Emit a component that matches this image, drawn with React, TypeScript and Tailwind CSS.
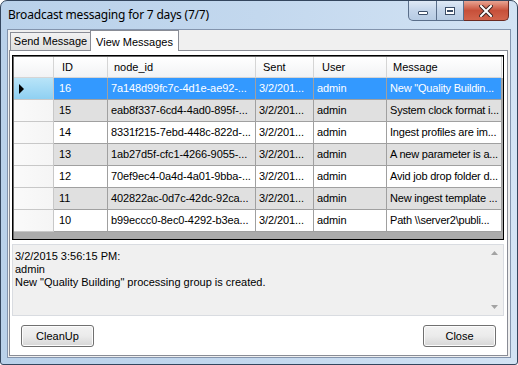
import React from 'react';

type Row = { id: number; node: string; sent: string; user: string; msg: string };

const rows: Row[] = [
  { id: 16, node: '7a148d99fc7c-4d1e-ae92-...', sent: '3/2/201...', user: 'admin', msg: 'New "Quality Buildin...' },
  { id: 15, node: 'eab8f337-6cd4-4ad0-895f-...', sent: '3/2/201...', user: 'admin', msg: 'System clock format i...' },
  { id: 14, node: '8331f215-7ebd-448c-822d-...', sent: '3/2/201...', user: 'admin', msg: 'Ingest profiles are im...' },
  { id: 13, node: '1ab27d5f-cfc1-4266-9055-...', sent: '3/2/201...', user: 'admin', msg: 'A new parameter is a...' },
  { id: 12, node: '70ef9ec4-0a4d-4a01-9bba-...', sent: '3/2/201...', user: 'admin', msg: 'Avid job drop folder d...' },
  { id: 11, node: '402822ac-0d7c-42dc-92ca...', sent: '3/2/201...', user: 'admin', msg: 'New ingest template ...' },
  { id: 10, node: 'b99eccc0-8ec0-4292-b3ea...', sent: '3/2/201...', user: 'admin', msg: 'Path \\\\server2\\publi...' },
];

const sans = "font-['Liberation_Sans',Arial,sans-serif]";

function CaptionButtons() {
  return (
    <div className="flex h-[20px] mr-[8px]">
      {/* minimize */}
      <div className="w-[29px] h-[20px] border border-t-0 border-[#5a6e8a] rounded-bl-[5px] bg-gradient-to-b from-[#dfe9f5] via-[#c4d5ea] to-[#b6cbe3] flex items-center justify-center">
        <div className="w-[10px] h-[4px] mt-[5px] bg-white border border-[#3c4e68] rounded-[1px]" />
      </div>
      {/* maximize */}
      <div className="w-[27px] h-[20px] border border-t-0 border-l-0 border-[#5a6e8a] bg-gradient-to-b from-[#dfe9f5] via-[#c4d5ea] to-[#b6cbe3] flex items-center justify-center">
        <div className="w-[10px] h-[8px] border border-[#3c4e68] bg-white flex items-center justify-center">
          <div className="w-[6px] h-[2px] border border-[#3c4e68] mt-[1px]" />
        </div>
      </div>
      {/* close */}
      <div className="w-[45px] h-[20px] border border-t-0 border-l-0 border-[#6b2a22] rounded-br-[5px] bg-gradient-to-b from-[#e8a493] via-[#c7503a] to-[#d2644c] flex items-center justify-center">
        <svg width="14" height="12" viewBox="0 0 14 12">
          <path d="M2 1 L12 11 M12 1 L2 11" stroke="#3c2320" strokeWidth="4" strokeLinecap="square" />
          <path d="M2 1 L12 11 M12 1 L2 11" stroke="#ffffff" strokeWidth="2" strokeLinecap="square" />
        </svg>
      </div>
    </div>
  );
}

function Grid() {
  const cols = ['w-[54px] pl-[5px]', 'w-[148px] pl-[3px]', 'w-[58px] pl-[3px]', 'w-[73px] pl-[3px]', 'w-[115px] pl-[3px] tracking-[-0.2px]'];
  const heads = [
    { label: 'ID', cls: 'w-[54px] pl-[8px]' },
    { label: 'node_id', cls: 'w-[148px] pl-[6px]' },
    { label: 'Sent', cls: 'w-[58px] pl-[7px]' },
    { label: 'User', cls: 'w-[73px] pl-[8px]' },
    { label: 'Message', cls: 'w-[115px] pl-[6px]' },
  ];
  return (
    <div className="h-[185px] border border-black bg-[#ababab] overflow-hidden">
      <div className="border-l border-t border-[#696969] h-full">
        {/* header */}
        <div className="flex h-[21px] bg-gradient-to-b from-white to-[#f1f2f4]">
          <div className="w-[40px] h-full border-r border-b border-[#d5d5d5]" />
          {heads.map((h) => (
            <div key={h.label} className={`${h.cls} h-full flex items-center border-r border-b border-[#d5d5d5] text-[11px] text-black whitespace-nowrap`}>
              {h.label}
            </div>
          ))}
        </div>
        {rows.map((r, i) => {
          const sel = i === 0;
          const bg = sel ? 'bg-[#3399ff] text-white' : i % 2 === 1 ? 'bg-[#e0e0e0] text-black' : 'bg-white text-black';
          const vals = [String(r.id), r.node, r.sent, r.user, r.msg];
          return (
            <div key={r.id} className="flex h-[22px]">
              <div
                className={`w-[40px] h-full border-r border-b border-[#c8c8c8] flex items-center pl-[5px] ${
                  sel ? 'bg-gradient-to-b from-[#b8e4f8] to-[#8fd0f2]' : 'bg-gradient-to-r from-[#fafafa] to-[#f5f5f5]'
                }`}
              >
                {sel && (
                  <svg width="6" height="10" viewBox="0 0 6 10">
                    <path d="M0 0 L5 5 L0 10 Z" fill="#000" />
                  </svg>
                )}
              </div>
              {vals.map((v, j) => (
                <div key={j} className={`${cols[j]} ${bg} h-full flex items-center border-r border-b border-[#a0a0a0] text-[11px] tracking-[-0.1px] whitespace-nowrap overflow-hidden`}>
                  {v}
                </div>
              ))}
            </div>
          );
        })}
      </div>
    </div>
  );
}

function MessageBox() {
  return (
    <div className="h-[72px] border border-[#d9dce1] bg-[#f0f0f0] flex">
      <div className="flex-1 pl-[2px] pt-[5px] text-[11px] leading-[13px] text-black">
        <div>3/2/2015 3:56:15 PM:</div>
        <div>admin</div>
        <div>New "Quality Building" processing group is created.</div>
      </div>
      <div className="w-[17px] h-full flex flex-col items-center justify-between py-[6px]">
        <svg width="7" height="4" viewBox="0 0 7 4">
          <path d="M0 4 L3.5 0 L7 4 Z" fill="#a3a3a3" />
        </svg>
        <svg width="7" height="4" viewBox="0 0 7 4">
          <path d="M0 0 L3.5 4 L7 0 Z" fill="#a3a3a3" />
        </svg>
      </div>
    </div>
  );
}

function Button({ label }: { label: string }) {
  return (
    <button className="w-[73px] h-[22px] rounded-[3px] border border-[#707070] bg-gradient-to-b from-[#f2f2f2] via-[#ebebeb] to-[#d6d6d6] text-[11px] text-black shadow-[inset_0_0_0_1px_#fcfcfc]">
      {label}
    </button>
  );
}

export default function App() {
  return (
    <div className={`w-[518px] h-[365px] bg-white ${sans}`}>
      <div className="w-full h-full rounded-t-[7px] rounded-b-[3px] border border-[#34465e] bg-gradient-to-r from-[#b9d1ea] via-[#c3d8ee] to-[#d3e3f4] flex flex-col">
        {/* title bar */}
        <div className="h-[28px] flex items-start justify-between">
          <div className="pl-[7px] pt-[6px] text-[12px] leading-[16px] text-black font-['Noto_Sans',sans-serif] tracking-[-0.2px]">
            Broadcast messaging for 7 days (7/7)
          </div>
          <CaptionButtons />
        </div>
        {/* client area */}
        <div className="mx-[6px] mb-[6px] flex-1 border border-[#8394ad] bg-[#f0f0f0] flex flex-col pl-[1px] pr-[2px] pb-[1px]">
          {/* tabs */}
          <div className="flex h-[20px] items-end pl-[1px]">
            <div className="w-[81px] h-[18px] border border-b-0 border-[#898c95] bg-gradient-to-b from-[#f2f2f2] to-[#e0e0e0] text-[11px] flex items-center justify-center">
              Send Message
            </div>
            <div className="w-[89px] h-[21px] border border-b-0 border-[#898c95] bg-white text-[11px] flex items-start justify-center pt-[3px] relative z-10 -mb-[1px] -ml-[1px]">
              View Messages
            </div>
          </div>
          {/* tab page */}
          <div className="flex-1 border border-[#898c95] bg-white flex flex-col pl-[2px] pr-[3px] pt-[4px]">
            <Grid />
            <div className="h-[4px]" />
            <MessageBox />
            <div className="flex justify-between pl-[9px] pr-[8px] pt-[9px]">
              <Button label="CleanUp" />
              <Button label="Close" />
            </div>
          </div>
        </div>
      </div>
    </div>
  );
}
